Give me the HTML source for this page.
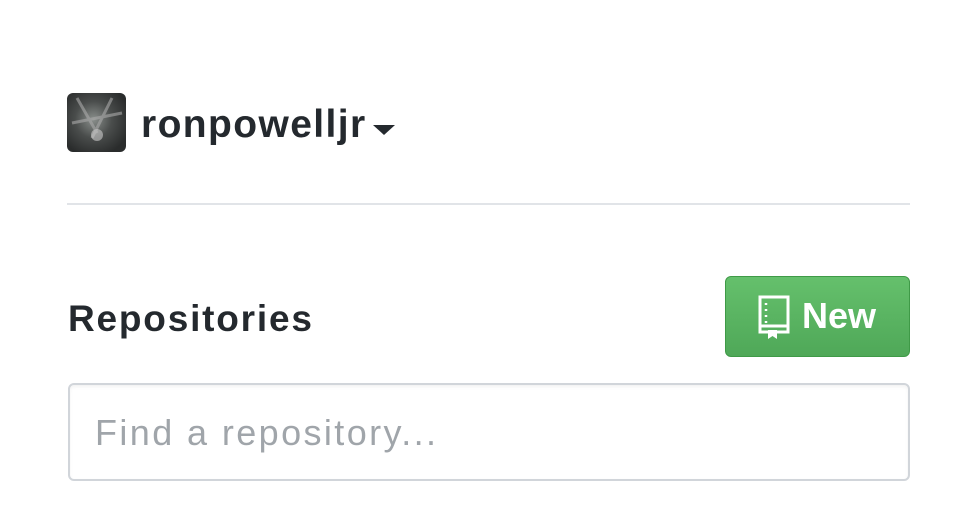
<!DOCTYPE html>
<html><head><style>
body{margin:0;width:974px;height:527px;background:#fff;font-family:"Liberation Sans",sans-serif;position:relative;overflow:hidden}
.av{position:absolute;left:67px;top:93px;width:59px;height:59px;border-radius:6px;background:radial-gradient(circle at 45% 45%,#8a8f8c 0,#4a4d4c 40%,#2a2c2c 80%);overflow:hidden}
.user{position:absolute;left:141px;top:103px;font-size:39px;font-weight:bold;color:#24292e;letter-spacing:1.4px}
.caret{position:absolute;left:373px;top:125px;width:0;height:0;border-left:11px solid transparent;border-right:11px solid transparent;border-top:10px solid #24292e}
.hr{position:absolute;left:67px;top:203px;width:843px;height:2px;background:#e1e4e8}
.repos{position:absolute;left:68px;top:298px;font-size:37px;font-weight:bold;color:#24292e;letter-spacing:1.8px}
.btn{position:absolute;left:725px;top:276px;width:183px;height:79px;border:1px solid #3f9a47;border-radius:6px;background:linear-gradient(#65c06c,#4fa858);color:#fff}
.btn span{position:absolute;left:76px;top:18px;font-size:36px;font-weight:bold}
.inp{position:absolute;left:68px;top:383px;width:838px;height:94px;border:2px solid #d1d5da;border-radius:6px;box-shadow:inset 0 2px 3px rgba(0,0,0,.05)}
.inp span{position:absolute;left:25px;top:27px;font-size:36px;color:#a0a5aa;letter-spacing:2.4px}
</style></head><body>
<div class="av"><svg width="59" height="59"><path d="M10 5L30 40M45 5L25 45M5 30L55 20" stroke="#aaa" stroke-width="3" opacity=".6"/><circle cx="30" cy="42" r="6" fill="#ccc" opacity=".6"/></svg></div>
<div class="user">ronpowelljr</div>
<div class="caret"></div>
<div class="hr"></div>
<div class="repos">Repositories</div>
<div class="btn"><svg style="position:absolute;left:31px;top:17px" width="34" height="46" viewBox="0 0 34 46"><path d="M3 3h28v35H3zM3 32h28" fill="none" stroke="#fff" stroke-width="3"/><path d="M9 9v2M9 15v2M9 21v2M9 27v2" stroke="#fff" stroke-width="2.5"/><path d="M11 36h9v9l-4.5-3-4.5 3z" fill="#fff"/></svg><span>New</span></div>
<div class="inp"><span>Find a repository...</span></div>
</body></html>
